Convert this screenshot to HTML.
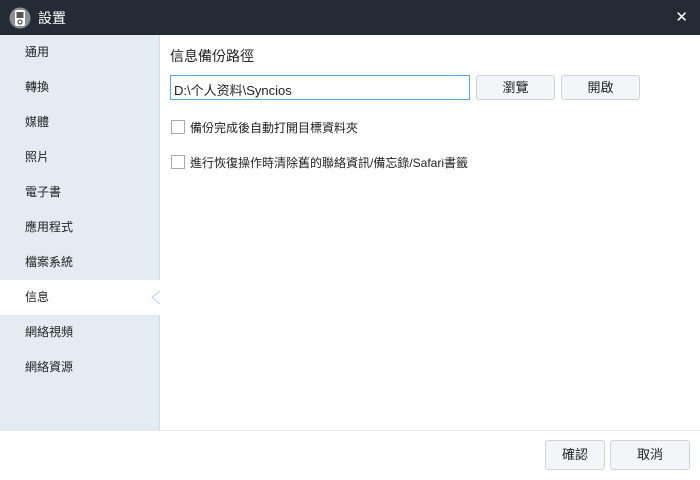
<!DOCTYPE html>
<html><head><meta charset="utf-8"><style>
*{margin:0;padding:0;box-sizing:border-box}
body{width:700px;height:480px;overflow:hidden;background:#fff;font-family:"Liberation Sans","Noto Sans CJK TC",sans-serif;font-size:12px;color:#222;position:relative}
.title{position:absolute;left:0;top:0;width:700px;height:35px;background:#252b34;color:#fff}
.title .t{position:absolute;left:38px;top:8px;font-size:14px}
.title .x{position:absolute;right:12px;top:8px;font-size:15px}
.side{position:absolute;left:0;top:35px;width:160px;height:396px;background:#e4ebf3;border-right:1px solid #c9dff0}
.it{height:35px;line-height:35px;padding-left:25px;font-size:12px}
.it.sel{background:#fff;position:relative;margin-right:-1px}
.arrow{position:absolute;right:0;top:11px;width:9px;height:13px}
.abs{position:absolute}
.btn{position:absolute;border:1px solid #cfd3d8;border-radius:3px;background:#f3f6f9;text-align:center;font-size:13px}
.cb{position:absolute;width:14px;height:14px;border:1px solid #aaa;background:#fff}
</style></head><body>
<div class="title">
<svg class="abs" style="left:9px;top:7px" width="22" height="22" viewBox="0 0 22 22"><circle cx="11" cy="11" r="10.5" fill="#8a8f96"/><rect x="6" y="3" width="10" height="16" rx="2" fill="#fff"/><rect x="7.5" y="5" width="7" height="6" fill="#555"/><circle cx="11" cy="15" r="2" fill="none" stroke="#555" stroke-width="1.2"/></svg>
<div class="t">設置</div><div class="x">✕</div></div>
<div class="side">
<div class="it">通用</div><div class="it">轉換</div><div class="it">媒體</div><div class="it">照片</div><div class="it">電子書</div><div class="it">應用程式</div><div class="it">檔案系統</div>
<div class="it sel">信息<svg class="arrow" viewBox="0 0 9 13"><polyline points="9,0 1,6.5 9,13" fill="#fff" stroke="#a9d3f5" stroke-width="1"/></svg></div>
<div class="it">網絡視頻</div><div class="it">網絡資源</div>
</div>
<div class="abs" style="left:170px;top:46px;font-size:14px">信息備份路徑</div>
<div class="abs" style="left:170px;top:75px;width:300px;height:25px;border:1px solid #5ea6db;padding:4px 3px;font-size:13px">D:\个人资料\Syncios</div>
<div class="btn" style="left:476px;top:75px;width:79px;height:25px;line-height:23px">瀏覽</div>
<div class="btn" style="left:561px;top:75px;width:79px;height:25px;line-height:23px">開啟</div>
<div class="cb" style="left:171px;top:120px"></div>
<div class="abs" style="left:190px;top:119px">備份完成後自動打開目標資料夾</div>
<div class="cb" style="left:171px;top:155px"></div>
<div class="abs" style="left:190px;top:154px">進行恢復操作時清除舊的聯絡資訊/備忘錄/Safari書籤</div>
<div class="abs" style="left:0;top:430px;width:700px;height:1px;background:#e8e8e8"></div>
<div class="btn" style="left:545px;top:440px;width:60px;height:30px;line-height:28px">確認</div>
<div class="btn" style="left:610px;top:440px;width:80px;height:30px;line-height:28px">取消</div>
</body></html>
